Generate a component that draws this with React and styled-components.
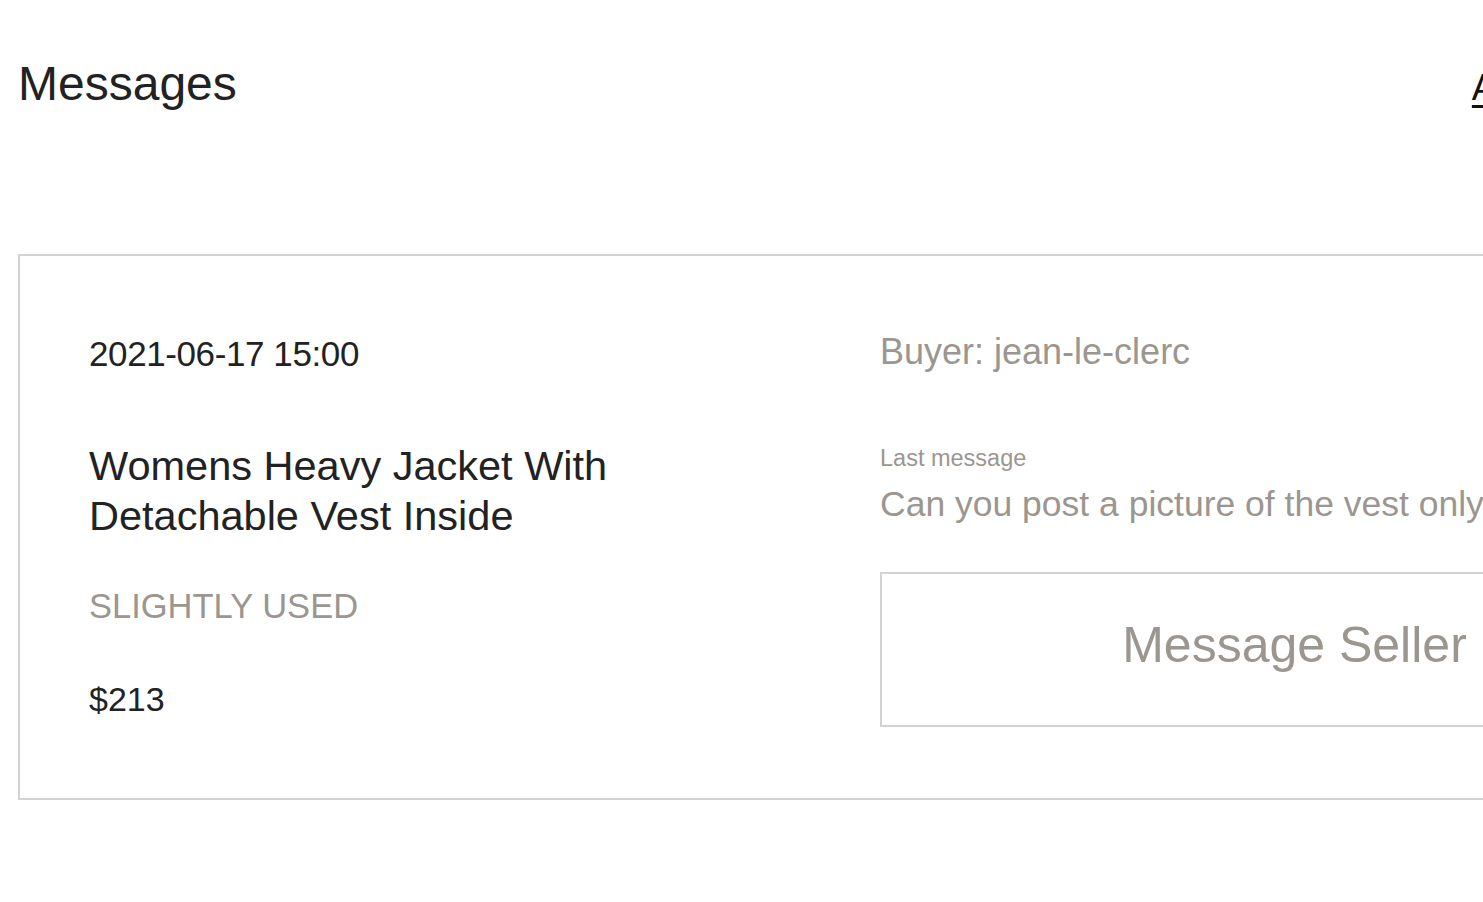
import React from "react";
import styled, { createGlobalStyle } from "styled-components";

const GlobalStyle = createGlobalStyle`
  html, body {
    margin: 0;
    padding: 0;
    background: #ffffff;
    overflow: hidden;
  }
  body {
    font-family: "Liberation Sans", Arial, sans-serif;
    color: #222222;
  }
`;

const Page = styled.div`
  width: 1765px;
  padding: 60px 0 0 18px;
`;

const Header = styled.div`
  display: flex;
  justify-content: space-between;
  align-items: baseline;
  height: 48px;
`;

const Title = styled.h1`
  margin: 0;
  font-size: 48px;
  line-height: 48px;
  font-weight: 400;
  color: #222222;
`;

const HeaderLink = styled.a`
  margin-right: -3px;
  font-size: 36px;
  line-height: 48px;
  color: #111111;
  text-decoration: underline;
  text-underline-offset: 5px;
  text-decoration-thickness: 3px;
`;

const Card = styled.div`
  margin-top: 146px;
  border: 2px solid #d2d2d2;
  padding: 80px 72px 71px 69px;
  display: grid;
  grid-template-columns: 791px 1fr;
`;

const Column = styled.div`
  display: flex;
  flex-direction: column;
  align-items: flex-start;
`;

const Text = styled.div`
  font-size: ${(p) => p.size}px;
  line-height: ${(p) => p.lh || p.size}px;
  color: ${(p) => (p.muted ? "#9b968f" : "#222222")};
  margin-top: ${(p) => p.gap || 0}px;
  letter-spacing: ${(p) => p.ls || 0}px;
  max-width: ${(p) => p.maxw || "none"};
  white-space: ${(p) => (p.nowrap ? "nowrap" : "normal")};
`;

const SellerButton = styled.button`
  margin-top: 50px;
  width: 100%;
  height: 155px;
  padding: 0 0 10px;
  background: #ffffff;
  border: 2px solid #d2d2d2;
  font-family: "Liberation Sans", Arial, sans-serif;
  font-size: 50px;
  color: #9b968f;
  cursor: pointer;
`;

export default function App() {
  return (
    <Page>
      <GlobalStyle />
      <Header>
        <Title>Messages</Title>
        <HeaderLink href="#">Archived messages</HeaderLink>
      </Header>
      <Card>
        <Column>
          <Text size={35} ls={-0.4}>2021-06-17 15:00</Text>
          <Text size={41.5} lh={50} gap={70} maxw="610px">
            Womens Heavy Jacket With Detachable Vest Inside
          </Text>
          <Text size={34.5} gap={48} muted>
            SLIGHTLY USED
          </Text>
          <Text size={34} gap={58}>$213</Text>
        </Column>
        <Column>
          <Text size={36} muted style={{ marginTop: -2 }}>Buyer: jean-le-clerc</Text>
          <Text size={23.5} gap={77} muted>Last message</Text>
          <Text size={35.5} gap={16} muted nowrap>
            Can you post a picture of the vest only?
          </Text>
          <SellerButton>Message Seller</SellerButton>
        </Column>
      </Card>
    </Page>
  );
}
